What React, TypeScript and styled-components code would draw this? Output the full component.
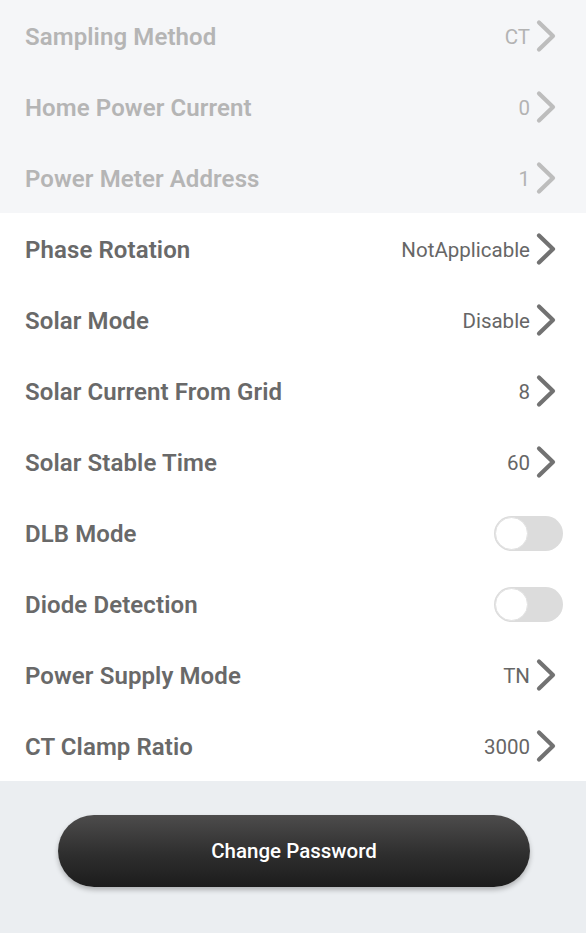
import styled, { createGlobalStyle } from "styled-components";

const Global = createGlobalStyle`
  html, body { margin: 0; padding: 0; background: #ebeef1; }
  body { font-family: Roboto, "Liberation Sans", sans-serif; }
`

type Item = { label: string; value?: string; toggle?: boolean }

const locked: Item[] = [
  { label: "Sampling Method", value: "CT" },
  { label: "Home Power Current", value: "0" },
  { label: "Power Meter Address", value: "1" },
]

const items: Item[] = [
  { label: "Phase Rotation", value: "NotApplicable" },
  { label: "Solar Mode", value: "Disable" },
  { label: "Solar Current From Grid", value: "8" },
  { label: "Solar Stable Time", value: "60" },
  { label: "DLB Mode", toggle: true },
  { label: "Diode Detection", toggle: true },
  { label: "Power Supply Mode", value: "TN" },
  { label: "CT Clamp Ratio", value: "3000" },
]

function Chevron({ muted }: { muted?: boolean }) {
  return (
    <svg width="24" height="36" viewBox="0 0 24 36">
      <path d="M5 4.5 L19 18 L5 31.5" fill="none" stroke={muted ? "#bdbdbd" : "#727272"} strokeWidth="4.2" strokeLinecap="round" strokeLinejoin="round" />
    </svg>
  )
}

function SettingRow({ item, muted }: { item: Item; muted?: boolean }) {
  return (
    <Row>
      <Label $muted={muted}>{item.label}</Label>
      {item.toggle
        ? <Switch><Knob /></Switch>
        : <Right>
          <Value $muted={muted}>{item.value}</Value>
          <Chevron muted={muted} />
        </Right>}
    </Row>
  )
}

export default function App() {
  return (
    <>
      <Global />
      <Page>
        <Section $bg="#f5f6f8">
          {locked.map(it => <SettingRow key={it.label} item={it} muted />)}
        </Section>
        <Section $bg="#ffffff">
          {items.map(it => <SettingRow key={it.label} item={it} />)}
        </Section>
        <Footer>
          <Button>Change Password</Button>
        </Footer>
      </Page>
    </>
  )
}

const Page = styled.div`
  width: 586px;
  min-height: 933px;
  display: flex;
  flex-direction: column;
  background: #ebeef1;
`

const Section = styled.div<{ $bg: string }>`
  display: flex;
  flex-direction: column;
  background: ${p => p.$bg};
`

const Row = styled.div`
  height: 71px;
  display: flex;
  align-items: center;
  justify-content: space-between;
  padding: 2px 28px 0 25px;
  box-sizing: border-box;
`

const Label = styled.div<{ $muted?: boolean }>`
  font-size: 24px;
  font-weight: 600;
  letter-spacing: 0.1px;
  color: ${p => p.$muted ? "#b5b5b5" : "#696969"};
`

const Right = styled.div`
  display: flex;
  align-items: center;
  gap: 4px;
  margin-top: -2px;
`

const Value = styled.span<{ $muted?: boolean }>`
  font-size: 20.5px;
  margin-top: 2px;
  color: ${p => p.$muted ? "#b3b3b3" : "#666666"};
`

const Switch = styled.div`
  width: 69px;
  height: 35px;
  border-radius: 18px;
  background: #dcdcdc;
  display: flex;
  align-items: center;
  margin-right: -5px;
  padding: 1px;
  box-sizing: border-box;
`

const Knob = styled.div`
  width: 33px;
  height: 33px;
  border-radius: 50%;
  background: #fff;
  box-sizing: border-box;
  border: 1.5px solid #e2e2e2;
`

const Footer = styled.div`
  flex: 1;
  display: flex;
  justify-content: center;
  padding-top: 34px;
`

const Button = styled.div`
  width: 472px;
  height: 72px;
  border-radius: 36px;
  background: linear-gradient(180deg, #4d4c4c 0%, #2e2e2e 55%, #1c1c1c 100%);
  box-shadow: 0 3px 5px rgba(0,0,0,0.25);
  color: #fff;
  font-size: 20.5px;
  font-weight: 500;
  display: flex;
  align-items: center;
  justify-content: center;
  margin-left: 2px;
`
